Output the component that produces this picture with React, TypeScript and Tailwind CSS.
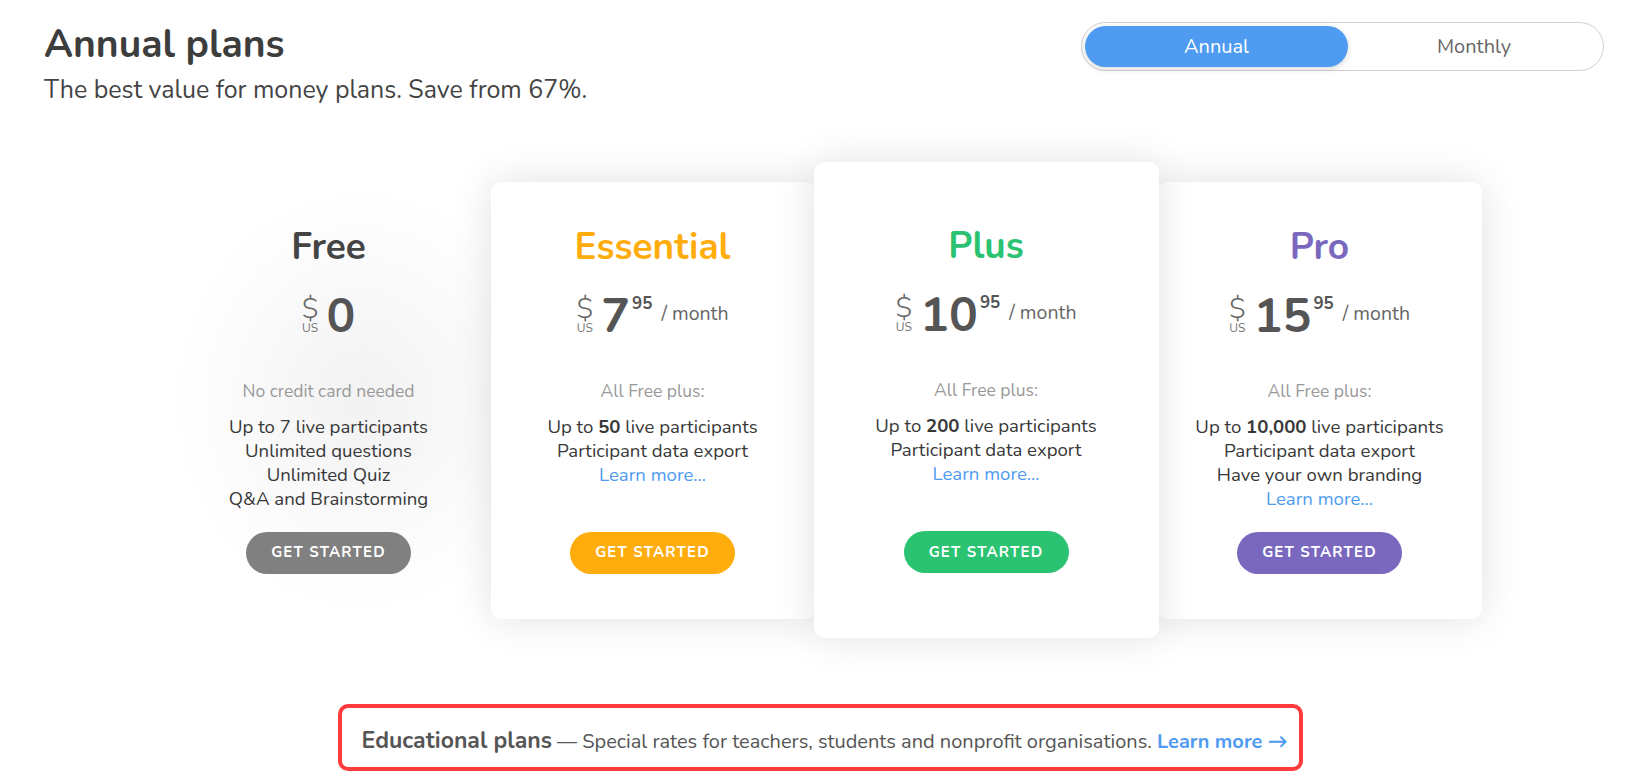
import React from "react";

type Plan = {
  name: string;
  color: string;
  btn: string;
  price: string;
  cents?: string;
  note: string;
  features: React.ReactNode[];
  learn?: boolean;
  card: boolean;
  featured?: boolean;
};

const plans: Plan[] = [
  {
    name: "Free",
    color: "text-[#444444]",
    btn: "bg-[#808080]",
    price: "0",
    note: "No credit card needed",
    features: ["Up to 7 live participants", "Unlimited questions", "Unlimited Quiz", "Q&A and Brainstorming"],
    card: false,
  },
  {
    name: "Essential",
    color: "text-[#ffad0d]",
    btn: "bg-[#ffad0d]",
    price: "7",
    cents: "95",
    note: "All Free plus:",
    features: [
      <>Up to <b className="font-bold">50</b> live participants</>,
      "Participant data export",
    ],
    learn: true,
    card: true,
  },
  {
    name: "Plus",
    color: "text-[#2bc372]",
    btn: "bg-[#2bc372]",
    price: "10",
    cents: "95",
    note: "All Free plus:",
    features: [
      <>Up to <b className="font-bold">200</b> live participants</>,
      "Participant data export",
    ],
    learn: true,
    card: true,
    featured: true,
  },
  {
    name: "Pro",
    color: "text-[#7a68bf]",
    btn: "bg-[#7a68bf]",
    price: "15",
    cents: "95",
    note: "All Free plus:",
    features: [
      <>Up to <b className="font-bold">10,000</b> live participants</>,
      "Participant data export",
      "Have your own branding",
    ],
    learn: true,
    card: true,
  },
];

const PlanCard = ({ plan }: { plan: Plan }) => {
  const box = plan.featured
    ? "w-[345px] h-[476px] pt-[62px] -mx-[1px] z-20 bg-white rounded-[10px] shadow-[0_0_40px_rgba(0,0,0,0.12)]"
    : plan.card
      ? "w-[324px] h-[437px] pt-[43px] z-10 bg-white rounded-[10px] shadow-[0_0_40px_rgba(0,0,0,0.12)]"
      : "w-[324px] h-[437px] pt-[43px] bg-[radial-gradient(ellipse_at_60%_50%,rgba(0,0,0,0.05),rgba(0,0,0,0)_70%)]";

  return (
    <div className={`relative flex flex-col items-center text-center ${box}`}>
      <h3 className={`text-[37px] leading-[44px] font-bold ${plan.color}`}>{plan.name}</h3>

      <div className="mt-[24px] h-[46px] flex items-start justify-center text-[#555555]">
        <div className="flex flex-col items-center mt-[3px]">
          <span className="text-[28px] leading-[26px] font-light text-[#666666]">$</span>
          <span className="text-[12px] leading-[12px] text-[#777777]">US</span>
        </div>
        <span className="ml-[8px] text-[48px] leading-[46px] font-bold">{plan.price}</span>
        {plan.cents && (
          <>
            <span className="ml-[2px] mt-[2px] text-[17px] leading-none font-bold">{plan.cents}</span>
            <span className="ml-[9px] mt-[11px] text-[19.5px] leading-none text-[#666666]">/ month</span>
          </>
        )}
      </div>

      <p className="mt-[40px] text-[17.5px] leading-[24px] text-[#999999]">{plan.note}</p>

      <div className="mt-[12px] h-[96px] text-[18.6px] leading-[24px] text-[#383838]">
        {plan.features.map((f, i) => (
          <div key={i}>{f}</div>
        ))}
        {plan.learn && <div className="text-[#4e9bf1]">Learn more...</div>}
      </div>

      <button
        className={`mt-[21px] w-[165px] h-[42px] rounded-full text-white text-[15px] font-bold tracking-[0.08em] ${plan.btn}`}
      >
        GET STARTED
      </button>
    </div>
  );
};

export default function App() {
  return (
    <div className="min-h-screen bg-white font-['Nunito','Lato',sans-serif] text-[#444444]">
      <header className="flex items-start justify-between px-[44px] pt-[22px]">
        <div>
          <h1 className="text-[39px] leading-[46px] font-bold text-[#3d3d3d]">Annual plans</h1>
          <p className="mt-[6px] text-[25px] leading-[32px] text-[#444444]">
            The best value for money plans. Save from 67%.
          </p>
        </div>
        <div className="flex w-[523px] h-[49px] items-center rounded-full border border-[#cfcfcf] p-[3px]">
          <div className="flex h-full w-[263px] items-center justify-center rounded-full bg-[#4e9bf1] text-[20px] text-white shadow-[0_2px_6px_rgba(0,0,0,0.15)]">
            Annual
          </div>
          <div className="flex h-full flex-1 items-center justify-center text-[20px] text-[#666666]">Monthly</div>
        </div>
      </header>

      <section className="mt-[56px] flex items-center justify-center">
        {plans.map((p) => (
          <PlanCard key={p.name} plan={p} />
        ))}
      </section>

      <div className="mt-[66px] flex justify-center">
        <div className="ml-[-8px] flex h-[67px] w-[965px] items-center rounded-[10px] border-[4px] border-[#ff3b3b] pl-[20px] pt-[8px]">
          <p className="text-[20px] text-[#555555] whitespace-nowrap">
            <span className="text-[23px] font-bold">Educational plans</span> — Special rates for teachers, students and
            nonprofit organisations. <span className="font-bold text-[#4e9bf1]">Learn more →</span>
          </p>
        </div>
      </div>
    </div>
  );
}
